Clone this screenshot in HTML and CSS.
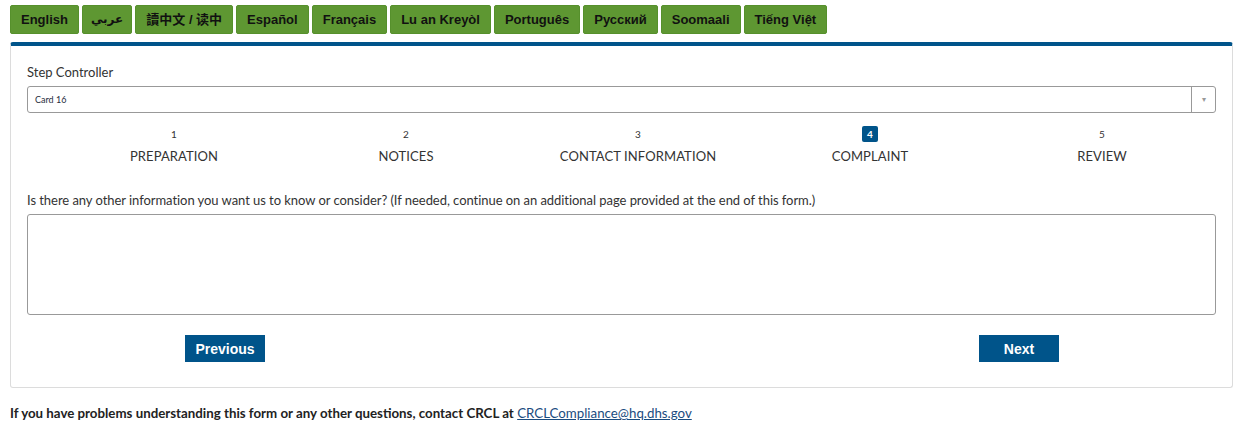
FILE: index.html
```html
<!DOCTYPE html>
<html lang="en">

<head>
    <meta charset="UTF-8" />
    <meta name="viewport" content="width=device-width, initial-scale=1.0" />
    <title>CRCL Complaint Form</title>
    <link rel="stylesheet" href="styles.css">
</head>

<body>

    <div class="lang-bar">
        <a class="lang-btn" href="#">English</a>
        <a class="lang-btn lang-ar" href="#">عربي</a>
        <a class="lang-btn" href="#">讀中文 / 读中</a>
        <a class="lang-btn" href="#">Español</a>
        <a class="lang-btn" href="#">Français</a>
        <a class="lang-btn" href="#">Lu an Kreyòl</a>
        <a class="lang-btn" href="#">Português</a>
        <a class="lang-btn" href="#">Русский</a>
        <a class="lang-btn" href="#">Soomaali</a>
        <a class="lang-btn" href="#">Tiếng Việt</a>
    </div>

    <div class="card">
        <label class="field-label">Step Controller</label>
        <div class="select-box">
            <span class="select-value">Card 16</span>
            <span class="select-arrow">&#9662;</span>
        </div>

        <div class="steps">
            <div class="step">
                <span class="step-num">1</span>
                <span class="step-name">PREPARATION</span>
            </div>
            <div class="step">
                <span class="step-num">2</span>
                <span class="step-name">NOTICES</span>
            </div>
            <div class="step">
                <span class="step-num">3</span>
                <span class="step-name">CONTACT INFORMATION</span>
            </div>
            <div class="step active">
                <span class="step-num">4</span>
                <span class="step-name">COMPLAINT</span>
            </div>
            <div class="step">
                <span class="step-num">5</span>
                <span class="step-name">REVIEW</span>
            </div>
        </div>

        <label class="question" for="otherInfo">Is there any other information you want us to know or consider? (If needed, continue on an additional page provided at the end of this form.)</label>
        <textarea id="otherInfo" class="answer"></textarea>

        <div class="nav-row">
            <button class="nav-btn">Previous</button>
            <button class="nav-btn">Next</button>
        </div>
    </div>

    <p class="contact">
        <strong>If you have problems understanding this form or any other questions, contact CRCL at</strong>
        <a href="#">CRCLCompliance@hq.dhs.gov</a>
    </p>

</body>

</html>
```

FILE: styles.css
```css
body {
    margin: 0;
    padding: 5px 12px 0 10px;
    font-family: Lato, "Open Sans", sans-serif;
    color: #333;
    background: #fff;
}

/* language switcher */
.lang-bar {
    display: flex;
    gap: 3px;
}

.lang-btn {
    display: block;
    height: 29px;
    line-height: 27px;
    padding: 0 10px;
    background-color: #5e9732;
    border: 1px solid #56902c;
    border-radius: 2px;
    box-sizing: border-box;
    color: #111;
    font-family: "Liberation Sans", Arial, "Noto Sans CJK SC", sans-serif;
    font-size: 13px;
    font-weight: bold;
    text-decoration: none;
}

.lang-ar {
    padding: 0 8px;
    font-family: "DejaVu Sans", sans-serif;
    font-size: 12px;
}

/* main card */
.card {
    margin-top: 8px;
    border: 1px solid #dcdcdc;
    border-top: 4px solid #00548a;
    border-radius: 3px;
    padding: 18px 16px 25px 16px;
}

.field-label {
    display: block;
    font-size: 13px;
    margin-bottom: 6px;
}

.select-box {
    display: flex;
    height: 27px;
    border: 1px solid #999;
    border-radius: 3px;
    box-sizing: border-box;
}

.select-value {
    flex: 1;
    padding-left: 7px;
    font-size: 9px;
    line-height: 25px;
    color: #1f2d3d;
}

.select-arrow {
    width: 23px;
    border-left: 1px solid #999;
    text-align: center;
    font-size: 8px;
    line-height: 25px;
    color: #999;
}

/* steps */
.steps {
    display: grid;
    grid-template-columns: repeat(5, 1fr);
    margin: 13px -2px 0 31px;
}

.step {
    display: flex;
    flex-direction: column;
    align-items: center;
    color: #333;
}

.step-num {
    height: 16px;
    min-width: 16px;
    line-height: 16px;
    text-align: center;
    font-size: 10px;
    border-radius: 2px;
}

.step-name {
    margin-top: 6px;
    font-size: 13px;
    letter-spacing: 0.1px;
}

.step.active .step-num {
    background-color: #00548a;
    color: #fff;
    font-weight: bold;
}

.question {
    display: block;
    margin-top: 28px;
    font-size: 13px;
    letter-spacing: -0.05px;
}

.answer {
    display: block;
    width: 100%;
    height: 101px;
    margin-top: 6px;
    border: 1px solid #999;
    border-radius: 3px;
    box-sizing: border-box;
    resize: none;
}

.nav-row {
    display: flex;
    justify-content: space-between;
    margin-top: 20px;
    padding: 0 157px 0 158px;
}

.nav-btn {
    width: 80px;
    height: 27px;
    border: none;
    background-color: #00548a;
    color: #fff;
    font-family: "Liberation Sans", Arial, sans-serif;
    font-size: 14px;
    font-weight: bold;
    cursor: pointer;
}

.contact {
    margin: 17px 0 0 0;
    font-size: 13.3px;
    color: #222;
}

.contact a {
    color: #1a4c80;
}
```
